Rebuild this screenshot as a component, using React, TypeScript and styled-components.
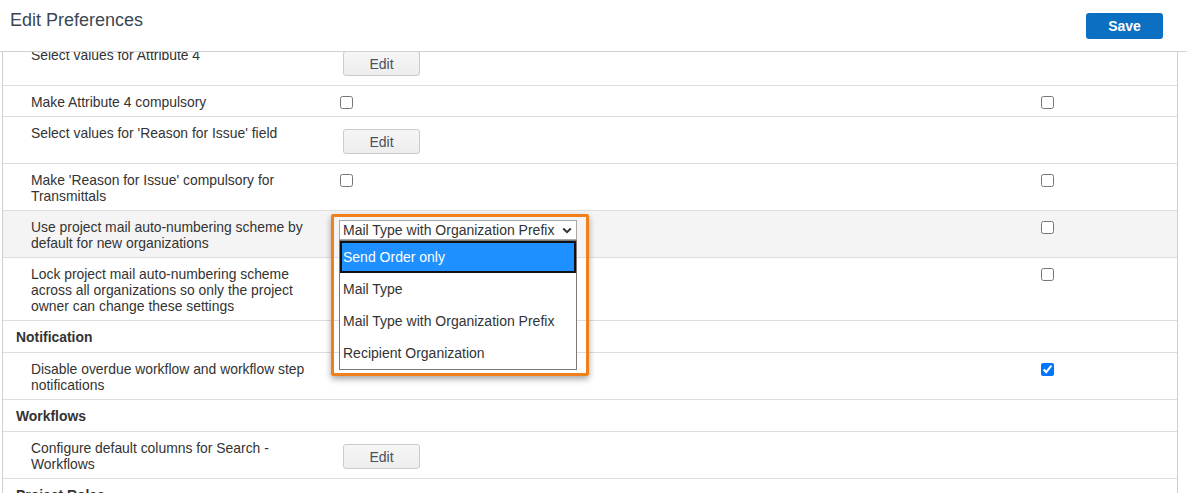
import React from "react";
import styled, { createGlobalStyle } from "styled-components";

const Global = createGlobalStyle`
  html, body { margin: 0; padding: 0; background: #fff; }
  body { font-family: "Liberation Sans", Arial, sans-serif; color: #333; }
`;

const Page = styled.div`
  width: 1187px;
  height: 493px;
  overflow: hidden;
  display: flex;
  flex-direction: column;
`;

const Header = styled.header`
  flex: none;
  height: 51px;
  display: flex;
  justify-content: space-between;
  align-items: flex-start;
  padding: 0 24px 0 10px;
  border-bottom: 1px solid #d2d2d2;
`;

const Title = styled.h1`
  margin: 9px 0 0;
  font-size: 18px;
  line-height: 22px;
  font-weight: normal;
  color: #3a4753;
`;

const SaveButton = styled.button`
  margin-top: 13px;
  width: 77px;
  height: 26px;
  border: none;
  border-radius: 3px;
  background: #0b70c1;
  color: #fff;
  font-family: "Liberation Sans", Arial, sans-serif;
  font-size: 14px;
  font-weight: bold;
  padding: 0;
`;

const ScrollArea = styled.div`
  flex: 1;
  margin: 0 9px 0 2px;
  border-left: 1px solid #cfcfcf;
  border-right: 1px solid #cfcfcf;
  overflow: hidden;
`;

const Table = styled.table`
  width: 100%;
  margin-top: -13px;
  border-collapse: collapse;
  table-layout: fixed;
`;

const Row = styled.tr<{ $shaded?: boolean }>`
  background: ${(p) => (p.$shaded ? "#f4f4f4" : "transparent")};
`;

const Cell = styled.td`
  border-bottom: 1px solid #dedede;
  padding: 8px 6px 6px;
  vertical-align: top;
  font-size: 13.9px;
  line-height: 16px;
  color: #333;
`;

const LabelCell = styled(Cell)`
  padding-left: 28px;
  padding-right: 10px;
`;

const SectionCell = styled(Cell)`
  padding-left: 13px;
  padding-bottom: 7px;
  font-weight: bold;
  color: #333;
`;

const Check = styled.input`
  display: block;
  margin: 2px 3px 0 4px;
  width: 13px;
  height: 13px;
`;

const EditButton = styled.button`
  display: block;
  margin: 4px 0 3px 7px;
  width: 77px;
  height: 25px;
  padding: 0;
  border: 1px solid #c6ccd4;
  border-radius: 3px;
  background: linear-gradient(#f6f6f6, #ededed);
  color: #4b505c;
  font-family: "Liberation Sans", Arial, sans-serif;
  font-size: 14px;
`;

const SelectWrap = styled.div`
  position: relative;
  width: 238px;
  margin: 1px 0 0 3px;
`;

const SelectBox = styled.div`
  box-sizing: border-box;
  height: 20px;
  border: 1px solid #a8a8a8;
  background: #fff;
  display: flex;
  align-items: center;
  justify-content: space-between;
  padding: 0 4px 0 3px;
  font-size: 14px;
  color: #333;
  white-space: nowrap;
`;

const OptionList = styled.div`
  position: absolute;
  top: 100%;
  left: 0;
  width: 238px;
  box-sizing: border-box;
  border: 1px solid #7a7a7a;
  background: #fff;
  z-index: 1;
`;

const Option = styled.div<{ $active?: boolean }>`
  height: 32px;
  display: flex;
  align-items: center;
  padding: 0 3px;
  font-size: 14px;
  color: ${(p) => (p.$active ? "#fff" : "#333")};
  background: ${(p) => (p.$active ? "#1e90ff" : "#fff")};
  box-shadow: ${(p) => (p.$active ? "inset 0 0 0 2px #111" : "none")};
`;

const Highlight = styled.div`
  position: absolute;
  left: -8px;
  top: -6px;
  width: 258px;
  height: 162px;
  box-sizing: border-box;
  border: 3px solid #ef801c;
  border-radius: 2px;
  box-shadow: 0 3px 6px rgba(0, 0, 0, 0.35);
  pointer-events: none;
  z-index: 2;
`;

const Chevron = () => (
  <svg width="10" height="7" viewBox="0 0 10 7">
    <path d="M1.2 1.5 L5 5.2 L8.8 1.5" stroke="#333" strokeWidth="2" fill="none" />
  </svg>
);

type Control = "edit" | "check" | "checked" | "select" | "none";
type Item =
  | { kind: "section"; label: string }
  | { kind: "row"; label: string; mid: Control; end: Control; shaded?: boolean };

const items: Item[] = [
  { kind: "row", label: "Select values for Attribute 4", mid: "edit", end: "none" },
  { kind: "row", label: "Make Attribute 4 compulsory", mid: "check", end: "check" },
  { kind: "row", label: "Select values for 'Reason for Issue' field", mid: "edit", end: "none" },
  { kind: "row", label: "Make 'Reason for Issue' compulsory for Transmittals", mid: "check", end: "check" },
  {
    kind: "row",
    label: "Use project mail auto-numbering scheme by default for new organizations",
    mid: "select",
    end: "check",
    shaded: true,
  },
  {
    kind: "row",
    label: "Lock project mail auto-numbering scheme across all organizations so only the project owner can change these settings",
    mid: "none",
    end: "check",
  },
  { kind: "section", label: "Notification" },
  { kind: "row", label: "Disable overdue workflow and workflow step notifications", mid: "none", end: "checked" },
  { kind: "section", label: "Workflows" },
  { kind: "row", label: "Configure default columns for Search - Workflows", mid: "edit", end: "none" },
  { kind: "section", label: "Project Roles" },
];

const options = ["Send Order only", "Mail Type", "Mail Type with Organization Prefix", "Recipient Organization"];

const renderControl = (c: Control) => {
  switch (c) {
    case "edit":
      return <EditButton>Edit</EditButton>;
    case "check":
      return <Check type="checkbox" readOnly />;
    case "checked":
      return <Check type="checkbox" checked readOnly />;
    case "select":
      return (
        <SelectWrap>
          <SelectBox>
            <span>Mail Type with Organization Prefix</span>
            <Chevron />
          </SelectBox>
          <OptionList>
            {options.map((o, i) => (
              <Option key={o} $active={i === 0}>
                {o}
              </Option>
            ))}
          </OptionList>
          <Highlight />
        </SelectWrap>
      );
    default:
      return null;
  }
};

export default function App() {
  return (
    <Page>
      <Global />
      <Header>
        <Title>Edit Preferences</Title>
        <SaveButton>Save</SaveButton>
      </Header>
      <ScrollArea>
        <Table>
          <colgroup>
            <col style={{ width: 327 }} />
            <col style={{ width: 701 }} />
            <col />
          </colgroup>
          <tbody>
            {items.map((it, i) =>
              it.kind === "section" ? (
                <Row key={i}>
                  <SectionCell colSpan={3}>{it.label}</SectionCell>
                </Row>
              ) : (
                <Row key={i} $shaded={it.shaded}>
                  <LabelCell>{it.label}</LabelCell>
                  <Cell>{renderControl(it.mid)}</Cell>
                  <Cell>{renderControl(it.end)}</Cell>
                </Row>
              )
            )}
          </tbody>
        </Table>
      </ScrollArea>
    </Page>
  );
}
